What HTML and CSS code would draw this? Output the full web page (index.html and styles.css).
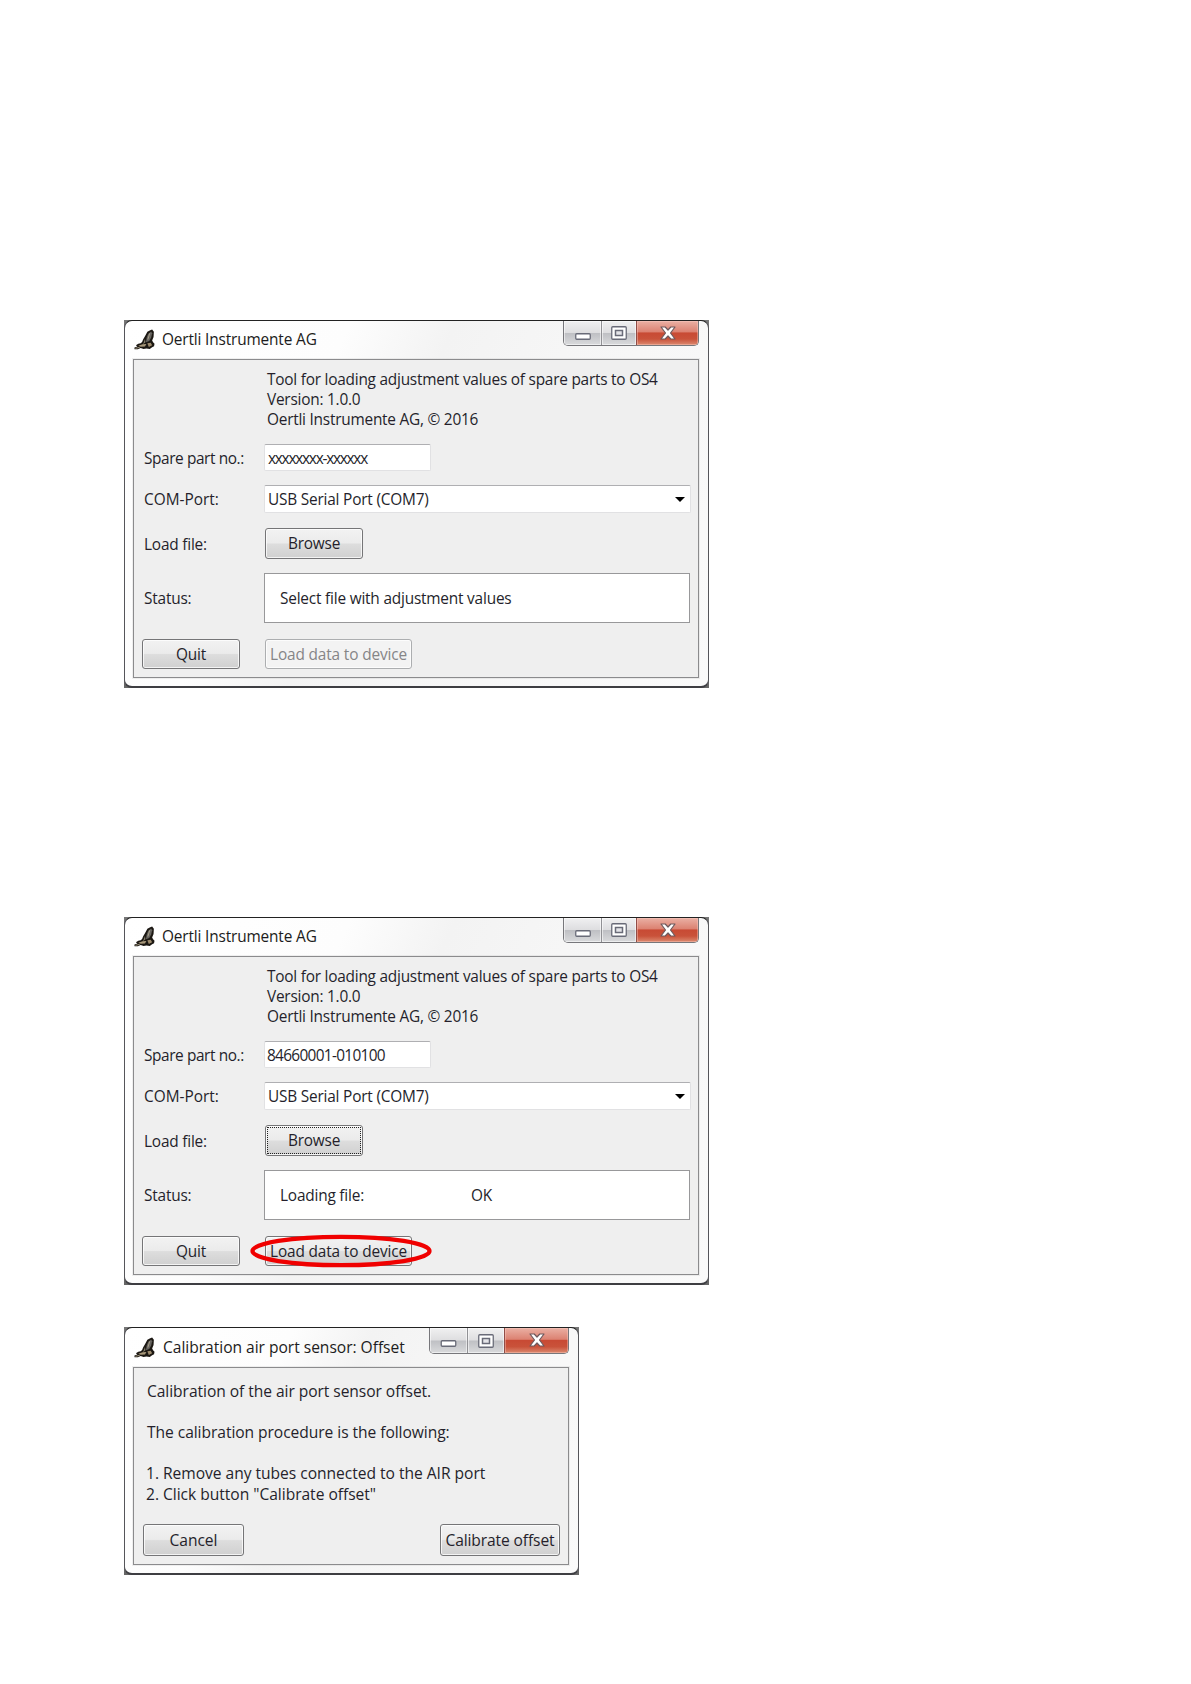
FILE: index.html
```html
<!DOCTYPE html>
<html lang="en">
<head>
<meta charset="utf-8">
<title>Oertli Instrumente AG</title>
<link rel="stylesheet" href="styles.css">
</head>
<body>
<svg class="defs" aria-hidden="true">
  <symbol id="eagle" viewBox="0 0 22 22">
    <path d="M19 .5 20.800 3 20.500 8.500 19 12 20 14 21.500 15.500 21 18 19 19 16.500 21 13 20.300 10 21 7 20 4 21.300 .5 21.300 .5 19.300 3.500 18.300 2 17 4.500 15.500 7 15 8.500 13.500 9.500 11 11.500 7.500 14 3 17 1.200Z" fill="#1b1712"/>
    <path d="M18 2.500 19 4.500 18 9 16 12.500 12.500 14 13.300 9 15 5Z" fill="#65635f"/>
    <path d="M11.500 10.500 12 14 9.500 16Z" fill="#8a8370"/>
    <path d="M4.500 17.500 9 16 13 15.800 11.500 18.300 7 18.600Z" fill="#a8987a"/>
    <path d="M14 15 17.500 14.500 19 17 15.500 18.800Z" fill="#9c8a6c"/>
    <path d="M1.500 20.200 6 19.200M16.500 4.500 14.500 11" stroke="#b3a88f" stroke-width=".9" fill="none"/>
  </symbol>
  <symbol id="minimize" viewBox="0 0 16 7">
    <rect x=".75" y=".75" width="14.500" height="5.500" rx="1" fill="#fff" stroke="#696b78" stroke-width="1.300"/>
  </symbol>
  <symbol id="maximize" viewBox="0 0 16 14">
    <rect x=".75" y=".75" width="14.500" height="12.500" rx="1" fill="#fff" stroke="#696b78" stroke-width="1.300"/>
    <rect x="4.500" y="4.500" width="7" height="5" fill="#e4e4e8" stroke="#696b78" stroke-width="1.500"/>
  </symbol>
  <symbol id="close" viewBox="0 0 16 14">
    <path d="M1 1H5.200L8 4 10.800 1H15L10.500 7 15 13H10.800L8 10 5.200 13H1L5.500 7Z" fill="#fff" stroke="#6e5a5e" stroke-width="1.200" stroke-linejoin="round"/>
  </symbol>
</svg>

<main class="page">
  <section class="frame first">
    <div class="window">
      <header class="titlebar">
        <svg class="logo"><use href="#eagle"/></svg>
        <h1 class="title">Oertli Instrumente AG</h1>
        <div class="controls">
          <span class="ctl min"><svg width="16" height="7"><use href="#minimize"/></svg></span>
          <span class="ctl max"><svg width="16" height="14"><use href="#maximize"/></svg></span>
          <span class="ctl close"><svg width="16" height="14"><use href="#close"/></svg></span>
        </div>
      </header>
      <div class="panel form">
        <div class="intro">Tool for loading adjustment values of spare parts to OS4<br>Version: 1.0.0<br>Oertli Instrumente AG, © 2016</div>
        <div class="row part"><span class="label tight">Spare part no.:</span><span class="field placeholder">xxxxxxxx-xxxxxx</span></div>
        <div class="row port"><span class="label wide">COM-Port:</span><span class="field select">USB Serial Port (COM7)<i class="arrow"></i></span></div>
        <div class="row file"><span class="label">Load file:</span><span class="button browse">Browse</span></div>
        <div class="row status"><span class="label">Status:</span><span class="box">Select file with adjustment values</span></div>
        <div class="row actions"><span class="button quit">Quit</span><span class="button load disabled">Load data to device</span></div>
      </div>
    </div>
  </section>

  <section class="frame second">
    <div class="window">
      <header class="titlebar">
        <svg class="logo"><use href="#eagle"/></svg>
        <h1 class="title">Oertli Instrumente AG</h1>
        <div class="controls">
          <span class="ctl min"><svg width="16" height="7"><use href="#minimize"/></svg></span>
          <span class="ctl max"><svg width="16" height="14"><use href="#maximize"/></svg></span>
          <span class="ctl close"><svg width="16" height="14"><use href="#close"/></svg></span>
        </div>
      </header>
      <div class="panel form">
        <div class="intro">Tool for loading adjustment values of spare parts to OS4<br>Version: 1.0.0<br>Oertli Instrumente AG, © 2016</div>
        <div class="row part"><span class="label tight">Spare part no.:</span><span class="field number">84660001-010100</span></div>
        <div class="row port"><span class="label wide">COM-Port:</span><span class="field select">USB Serial Port (COM7)<i class="arrow"></i></span></div>
        <div class="row file"><span class="label">Load file:</span><span class="button browse focused">Browse</span></div>
        <div class="row status"><span class="label">Status:</span><span class="box"><span class="step">Loading file:</span><span>OK</span></span></div>
        <div class="row actions"><span class="button quit">Quit</span><span class="button load">Load data to device<svg class="marker" viewBox="0 0 182 34"><ellipse cx="91" cy="17" rx="88.500" ry="14.200"/></svg></span></div>
      </div>
    </div>
  </section>

  <section class="frame third">
    <div class="window">
      <header class="titlebar">
        <svg class="logo"><use href="#eagle"/></svg>
        <h1 class="title">Calibration air port sensor: Offset</h1>
        <div class="controls">
          <span class="ctl min"><svg width="17" height="7"><use href="#minimize"/></svg></span>
          <span class="ctl max"><svg width="16" height="14"><use href="#maximize"/></svg></span>
          <span class="ctl close"><svg width="16" height="14"><use href="#close"/></svg></span>
        </div>
      </header>
      <div class="panel steps">
        <p>Calibration of the air port sensor offset.</p>
        <p>The calibration procedure is the following:</p>
        <p class="list">1. Remove any tubes connected to the AIR port<br>2. Click button "Calibrate offset"</p>
        <div class="footer"><span class="button cancel">Cancel</span><span class="button calibrate">Calibrate offset</span></div>
      </div>
    </div>
  </section>
</main>
</body>
</html>
```
FILE: styles.css
```css
* { box-sizing: border-box; }
body {
  margin: 0;
  background: #fff;
  color: #251f2b;
  font: 15.400px/20px "Open Sans", "Noto Sans", sans-serif;
  letter-spacing: -.2px;
}
.defs { display: none; }
.page {
  display: flex;
  flex-direction: column;
  align-items: flex-start;
  height: 1684px;
  padding: 320px 0 0 124px;
}

/* window frame */
.frame { background: linear-gradient(#777 50%, #666); }
.first, .second { width: 585px; height: 368px; }
.second { margin-top: 229px; }
.third { width: 455px; height: 248px; margin-top: 42px; }
.window {
  height: 100%;
  padding: 0 9px 9px 8px;
  border: 1px solid #55555a;
  border-top-color: #222;
  border-bottom: 2px solid #3e3e42;
  border-radius: 8px;
  background: linear-gradient(115deg, #fff 0%, #fdfdfd 30%, #f3f3f3 44%, #f6f6f6 60%, #fafafa 100%);
}
.titlebar { display: flex; align-items: flex-start; height: 38px; }
.logo { width: 21px; height: 21px; margin: 8px 0 0 1px; }
.title {
  margin: 9px 0 0 7px;
  font-size: 15.400px;
  font-weight: 400;
  line-height: 20px;
  letter-spacing: -.15px;
  color: #1c1c20;
  white-space: nowrap;
}
.controls {
  display: flex;
  width: 136px;
  height: 25px;
  margin-left: auto;
  border: 1px solid #77777b;
  border-top: 0;
  border-radius: 0 0 5px 5px;
  overflow: hidden;
}
.ctl {
  display: flex;
  justify-content: center;
  background: linear-gradient(#f0f0f1 0%, #dedee0 48%, #bfc0c4 52%, #d9dadc 100%);
  box-shadow: inset 0 0 0 1px rgba(255,255,255,.55);
}
.ctl svg { display: block; }
.min { width: 38px; padding-top: 12px; border-right: 1px solid #919195; }
.max { width: 35px; padding-top: 5px; border-right: 1px solid #914c46; }
.close {
  flex: 1;
  padding-top: 5px;
  background: linear-gradient(#eab0a4 0%, #dc8272 45%, #c84a34 50%, #c9523a 75%, #dc8a70 100%);
  box-shadow: inset 0 0 0 1px rgba(255,210,200,.4);
}
.panel {
  border: 1px solid #8b8b8d;
  background: #efefef;
  box-shadow: 0 0 0 1px rgba(150,150,150,.14);
}

/* adjustment form */
.form { height: 319px; padding: 10px 7px 0 8px; }
.intro { height: 60px; padding-left: 125px; line-height: 19.800px; letter-spacing: -.23px; white-space: nowrap; }
.row { display: flex; align-items: center; }
.label { width: 122px; padding: 2px 0 0 2px; white-space: nowrap; }
.tight { letter-spacing: -.4px; }
.wide { letter-spacing: 0; }
.part { height: 27px; margin-top: 14px; }
.port { height: 28px; margin-top: 14px; }
.file { height: 31px; margin-top: 15px; }
.status { height: 50px; margin-top: 14px; }
.actions { height: 30px; margin-top: 16px; }
.field {
  width: 167px;
  height: 27px;
  padding: 4px 0 0 3px;
  border: 1px solid #e1e1e3;
  border-top-color: #afafb2;
  border-radius: 2px;
  background: #fff;
  line-height: 20px;
}
.placeholder { letter-spacing: -1.250px; }
.number { padding-left: 2px; letter-spacing: -.68px; }
.select {
  display: flex;
  align-items: center;
  justify-content: space-between;
  width: 427px;
  height: 28px;
  padding: 1px 5px 0 3px;
}
.arrow {
  border: 5px solid transparent;
  border-top-color: #000;
  border-bottom: 0;
}
.box {
  display: flex;
  align-items: center;
  width: 426px;
  height: 50px;
  padding: 2px 0 0 15px;
  border: 1px solid #98989a;
  background: #fff;
}
.step { width: 191px; }

/* buttons */
.button {
  position: relative;
  display: flex;
  justify-content: center;
  align-items: center;
  width: 98px;
  height: 31px;
  border: 1px solid #757577;
  border-radius: 3px;
  background: linear-gradient(#f2f2f2 0%, #ebebeb 48%, #dddddd 52%, #d0d0d0 100%);
  box-shadow: inset 0 0 0 1px rgba(255,255,255,.75);
  white-space: nowrap;
}
.browse { margin-left: 1px; }
.load { width: 147px; margin-left: 25px; letter-spacing: -.15px; }
.actions .button { height: 30px; padding-top: 1px; }
.disabled { border-color: #acaeb0; background: #f3f3f3; color: #858587; }
.focused::after {
  content: "";
  position: absolute;
  inset: 1px;
  border: 1px dotted #222;
}
.marker {
  position: absolute;
  left: -16px;
  top: -3px;
  width: 182px;
  height: 34px;
  fill: none;
  stroke: #f00000;
  stroke-width: 4.300px;
}

/* calibration dialog */
.third .titlebar { height: 39px; }
.third .title { font-size: 15.600px; letter-spacing: -.03px; margin-left: 8px; }
.third .logo { margin-top: 9px; }
.third .controls { width: 140px; height: 26px; }
.third .max { width: 37px; padding-top: 6px; }
.steps { height: 198px; padding: 13px 8px 0 9px; font-size: 15.600px; line-height: 20.500px; letter-spacing: -.06px; }
.steps p { margin: 0 0 20.500px 4px; white-space: nowrap; }
.steps .list { margin-left: 3px; letter-spacing: -.03px; }
.footer { display: flex; justify-content: space-between; margin-top: -.5px; }
.cancel { width: 101px; height: 32px; }
.calibrate { width: 120px; height: 32px; letter-spacing: -.12px; }
```
